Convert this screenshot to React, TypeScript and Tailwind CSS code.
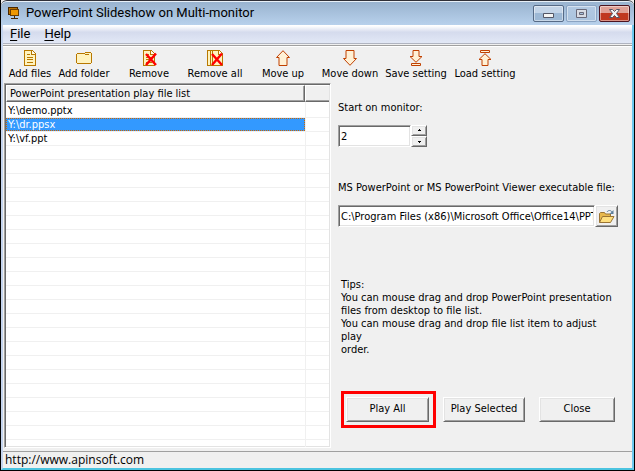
import { useState } from "react";
import type { ReactNode } from "react";
import clsx from "clsx";

const raised =
  "border border-t-white border-l-white border-r-[#696969] border-b-[#696969] bg-[#f0f0f0] shadow-[inset_1px_1px_0_#e3e3e3,inset_-1px_-1px_0_#a0a0a0]";
const sunken =
  "border border-t-[#a0a0a0] border-l-[#a0a0a0] border-r-white border-b-white bg-white shadow-[inset_1px_1px_0_#696969,inset_-1px_-1px_0_#e3e3e3]";

const files = ["Y:\\demo.pptx", "Y:\\dr.ppsx", "Y:\\vf.ppt"];
const emptyRows = Array.from({ length: 22 }, (_, i) => i);

function Icon({ children }: { children: ReactNode }) {
  return (
    <svg width="16" height="16" viewBox="0 0 16 16" shapeRendering="crispEdges" aria-hidden="true">
      {children}
    </svg>
  );
}

function PagePaths() {
  return (
    <>
      <path d="M2.5 .5h8l3 3v12h-11z" fill="#fff3bf" stroke="#b87800" />
      <path d="M9.5 .5v4h4" fill="#fffbe8" stroke="#b87800" />
      <path d="M5 4.5h3M5 7.5h6M5 9.5h6M5 12.5h6" stroke="#b87800" />
    </>
  );
}

function CrossPath() {
  return (
    <path
      d="M5 4l10 11M15 3.5l-10 11.5"
      fill="none"
      stroke="#f00"
      strokeWidth="2.4"
      shapeRendering="geometricPrecision"
    />
  );
}

const arrow = { fill: "#fff1d6", stroke: "#c04000", shapeRendering: "geometricPrecision" };

const tools = [
  { label: "Add files", width: "w-[52px]", icon: <PagePaths /> },
  {
    label: "Add folder",
    width: "w-14",
    icon: (
      <>
        <path d="M.5 4.5l1-1h7l1-1h5l1 1v9l-1 1h-13l-1-1z" fill="#fff3bf" stroke="#b87800" />
        <path d="M9 4.5h4" stroke="#b87800" />
      </>
    ),
  },
  {
    label: "Remove",
    width: "w-[74px]",
    icon: (
      <>
        <PagePaths />
        <CrossPath />
      </>
    ),
  },
  {
    label: "Remove all",
    width: "w-[58px]",
    icon: (
      <>
        <path d="M.5 .5h3v15h-3zM3.5 .5h3v15h-3z" fill="#fff3bf" stroke="#b87800" />
        <path d="M5.5 .5h7l3 3v12h-10z" fill="#fff3bf" stroke="#b87800" />
        <path d="M11.5 .5v4h4" fill="#fffbe8" stroke="#b87800" />
        <CrossPath />
      </>
    ),
  },
  {
    label: "Move up",
    width: "w-[78px]",
    icon: <path d="M8 .7l6.5 6.8h-2.5v8h-8v-8h-2.5z" {...arrow} />,
  },
  {
    label: "Move down",
    width: "w-14",
    icon: <path d="M8 15.3l6.5-6.8h-2.5v-8h-8v8h-2.5z" {...arrow} />,
  },
  {
    label: "Save setting",
    width: "w-[76px]",
    icon: (
      <>
        <path d="M8 12.3l6-5.8h-3v-6h-6v6h-3z" {...arrow} />
        <path d="M3.5 13.5h9v2h-9z" {...arrow} />
      </>
    ),
  },
  {
    label: "Load setting",
    width: "w-[62px]",
    icon: (
      <>
        <path d="M8 3.7l6 5.8h-3v6h-6v-6h-3z" {...arrow} />
        <path d="M3.5 .5h9v2h-9z" {...arrow} />
      </>
    ),
  },
];

function TitleBar() {
  const frame =
    "flex h-[17px] w-[31px] items-center justify-center rounded-[2px] border shadow-[inset_0_0_0_1px_rgba(255,255,255,0.45)]";
  return (
    <header className="flex h-[25px] shrink-0 items-center rounded-t-md border-t border-[#303038] bg-linear-to-b from-[#98b2ce] to-[#b8d1ec] pr-1 pl-[6px] shadow-[inset_0_1px_0_#e8f0f8]">
      <svg width="13" height="14" viewBox="0 0 13 14" shapeRendering="crispEdges" aria-hidden="true">
        <path d="M1 1h9v7h-9z" fill="#b87000" stroke="#4a2800" />
        <path d="M3.5 3.5h8v6h-8z" fill="#f09800" stroke="#6a3c00" />
        <path d="M7.5 10v2M4 12.5h7" stroke="#4a2800" />
      </svg>
      <h1 className="ml-[6px] flex-1 font-['Roboto',sans-serif] text-[13px] leading-4">
        PowerPoint Slideshow on Multi-monitor
      </h1>
      <div className="flex gap-[2px]">
        <button
          aria-label="Minimize"
          className={clsx(frame, "border-[#566a86] bg-linear-to-b from-[#c3d4e8] from-45% to-[#9db8d5] to-50%")}
        >
          <svg width="11" height="5" viewBox="0 0 11 5" className="mt-1" aria-hidden="true">
            <path d="M.5 .5h10v4h-10z" fill="#f4f4f4" stroke="#535666" />
          </svg>
        </button>
        <button
          aria-label="Maximize"
          className={clsx(frame, "border-[#8aa3c2] bg-linear-to-b from-[#b3c9e2] to-[#abc4df]")}
        >
          <svg width="11" height="9" viewBox="0 0 11 9" aria-hidden="true">
            <path d="M.5 .5h10v8h-10z" fill="#d9dce4" stroke="#686878" />
            <path d="M3.5 3.5h4v2h-4z" fill="#a8c0dc" stroke="#686878" />
          </svg>
        </button>
        <button
          aria-label="Close window"
          className={clsx(frame, "border-[#4c1420] bg-linear-to-b from-[#e0a096] from-45% to-[#c03820] to-50%")}
        >
          <svg width="13" height="11" viewBox="0 0 13 11" aria-hidden="true">
            <path
              d="M1.5 1.5h3l2 2 2-2h3l-3 4 3 4h-3l-2-2-2 2h-3l3-4z"
              fill="#f4f4f4"
              stroke="#535666"
            />
          </svg>
        </button>
      </div>
    </header>
  );
}

function FileList() {
  const [selected, setSelected] = useState(1);
  const cell = "h-[14px] border-b border-[#f0f0f0] p-0";

  return (
    <section className="min-h-0 w-[327px] shrink-0 overflow-hidden border border-t-[#a0a0a0] border-r-white border-b-white border-l-[#a0a0a0] bg-white p-px shadow-[inset_1px_1px_0_#696969,inset_-1px_-1px_0_#e3e3e3]">
      <table className="w-full table-fixed border-separate border-spacing-0">
        <colgroup>
          <col />
          <col className="w-[24px]" />
        </colgroup>
        <thead>
          <tr>
            <th
              scope="col"
              className="h-[17px] border-t border-r border-b border-l border-t-white border-r-[#696969] border-b-[#696969] border-l-white bg-[#f0f0f0] p-0 pl-[3px] text-left leading-[15px] font-normal shadow-[inset_-1px_-1px_0_#a0a0a0]"
            >
              PowerPoint presentation play file list
            </th>
            <td className="border-t border-b border-l border-t-white border-b-[#696969] border-l-white bg-[#f0f0f0] shadow-[inset_0_-1px_0_#a0a0a0]" />
          </tr>
        </thead>
        <tbody>
          <tr aria-hidden="true">
            <td className="h-[2px] p-0" />
            <td className="border-l border-[#f0f0f0] p-0" />
          </tr>
          {files.map((file, i) => (
            <tr key={file} onClick={() => setSelected(i)} aria-selected={selected === i}>
              <td className={cell}>
                <div
                  className={clsx(
                    "h-[13px] border border-dotted pl-px leading-[11px]",
                    selected === i ? "border-[#cc6600] bg-[#3399ff] text-white" : "border-transparent"
                  )}
                >
                  {file}
                </div>
              </td>
              <td className={clsx(cell, "border-l")} />
            </tr>
          ))}
          {emptyRows.map((row) => (
            <tr key={row} aria-hidden="true">
              <td className={cell} />
              <td className={clsx(cell, "border-l")} />
            </tr>
          ))}
        </tbody>
      </table>
    </section>
  );
}

function SettingsPanel() {
  const [monitor, setMonitor] = useState(2);
  const [path, setPath] = useState("C:\\Program Files (x86)\\Microsoft Office\\Office14\\PPTVIEW.EXE");
  const spin = clsx(raised, "flex h-[11px] w-4 items-center justify-center");

  return (
    <section className="flex min-w-0 flex-1 flex-col pt-[17px] pr-[14px] pl-[7px]">
      <label htmlFor="monitor" className="h-4 leading-4">
        Start on monitor:
      </label>
      <div className="mt-[9px] flex">
        <input
          id="monitor"
          inputMode="numeric"
          value={monitor}
          onChange={(e) => setMonitor(Number(e.target.value) || 0)}
          className={clsx(sunken, "h-[22px] w-[73px] px-[2px] outline-none")}
        />
        <div className="flex flex-col">
          <button aria-label="Next monitor" className={spin} onClick={() => setMonitor(monitor + 1)}>
            <svg width="5" height="3" viewBox="0 0 5 3" shapeRendering="crispEdges" aria-hidden="true">
              <path d="M2 0h1v1h1v1h-3v-1h1z" />
            </svg>
          </button>
          <button
            aria-label="Previous monitor"
            className={spin}
            onClick={() => setMonitor(Math.max(1, monitor - 1))}
          >
            <svg width="5" height="3" viewBox="0 0 5 3" shapeRendering="crispEdges" aria-hidden="true">
              <path d="M1 1h3v1h-1v1h-1v-1h-1z" />
            </svg>
          </button>
        </div>
      </div>

      <label htmlFor="viewer" className="mt-[33px] h-4 leading-4 whitespace-nowrap">
        MS PowerPoint or MS PowerPoint Viewer executable file:
      </label>
      <div className="mt-[9px] flex">
        <input
          id="viewer"
          value={path}
          onChange={(e) => setPath(e.target.value)}
          className={clsx(sunken, "h-[22px] min-w-0 flex-1 pr-px pl-[2px] outline-none")}
        />
        <button
          aria-label="Browse"
          className={clsx(raised, "flex h-[22px] w-[23px] items-center justify-center")}
        >
          <svg width="17" height="15" viewBox="0 0 17 15" aria-hidden="true">
            <path d="M1.5 13.5v-9l1-1h4l1 1.5h5v3" fill="#e8b84c" stroke="#9a7434" />
            <path d="M1.5 13.5l3-6h11.5l-3.5 6z" fill="#ffdf7e" stroke="#9a7434" />
            <path d="M9 3c1-2 4-2 5 0" fill="none" stroke="#5d7f9c" />
            <path d="M15.5 1v4h-4z" fill="#5d7f9c" />
          </svg>
        </button>
      </div>

      <p className="mt-[51px] pl-[3px] leading-[13px] whitespace-nowrap">
        Tips:
        <br />
        You can mouse drag and drop PowerPoint presentation
        <br />
        files from desktop to file list.
        <br />
        You can mouse drag and drop file list item to adjust
        <br />
        play
        <br />
        order.
      </p>

      <div className="mt-[35px] flex items-center pl-[3px]">
        <div className="border-3 border-[#ff0000] py-[3px] pr-1 pl-[2px]">
          <button className={clsx(raised, "h-[25px] w-[83px]")}>Play All</button>
        </div>
        <button className={clsx(raised, "ml-[7px] h-[25px] w-[82px]")}>Play Selected</button>
        <button className={clsx(raised, "ml-[14px] h-[25px] w-[76px]")}>Close</button>
      </div>
    </section>
  );
}

export default function App() {
  return (
    <div className="flex h-screen flex-col border-x border-b border-black bg-[#f0f0f0] font-['DejaVu_Sans_Condensed','DejaVu_Sans',sans-serif] text-[11px] text-black">
      <TitleBar />
      <div className="flex min-h-0 flex-1 flex-col border-r-2 border-b-2 border-l-2 border-r-[#6cc8ee] border-b-[#4cc4e0] border-l-[#c4d4ee]">
        <nav className="flex h-[19px] shrink-0 items-center gap-[14px] border-b border-[#b0b4c0] bg-linear-to-b from-white from-5% via-[#d5dbed] via-40% to-[#e2e8f6] px-[7px] font-['Roboto',sans-serif] text-[13px] leading-4">
          <button>
            <u className="underline-offset-2">F</u>ile
          </button>
          <button>
            <u className="underline-offset-2">H</u>elp
          </button>
        </nav>
        <div className="mt-px flex h-[38px] shrink-0 border-t border-[#a0a0a0] pl-px shadow-[inset_0_1px_0_#fff]">
          {tools.map((tool) => (
            <button
              key={tool.label}
              className={clsx("flex flex-col items-center pt-1 leading-4 whitespace-nowrap", tool.width)}
            >
              <Icon>{tool.icon}</Icon>
              {tool.label}
            </button>
          ))}
        </div>
        <main className="flex min-h-0 flex-1 pl-px">
          <FileList />
          <SettingsPanel />
        </main>
        <footer className="mt-[3px] h-[17px] shrink-0 border-t border-[#a0a0a0] pl-[2px] font-['Open_Sans',sans-serif] text-[12px] leading-4">
          <a href="http://www.apinsoft.com">http://www.apinsoft.com</a>
        </footer>
      </div>
    </div>
  );
}
